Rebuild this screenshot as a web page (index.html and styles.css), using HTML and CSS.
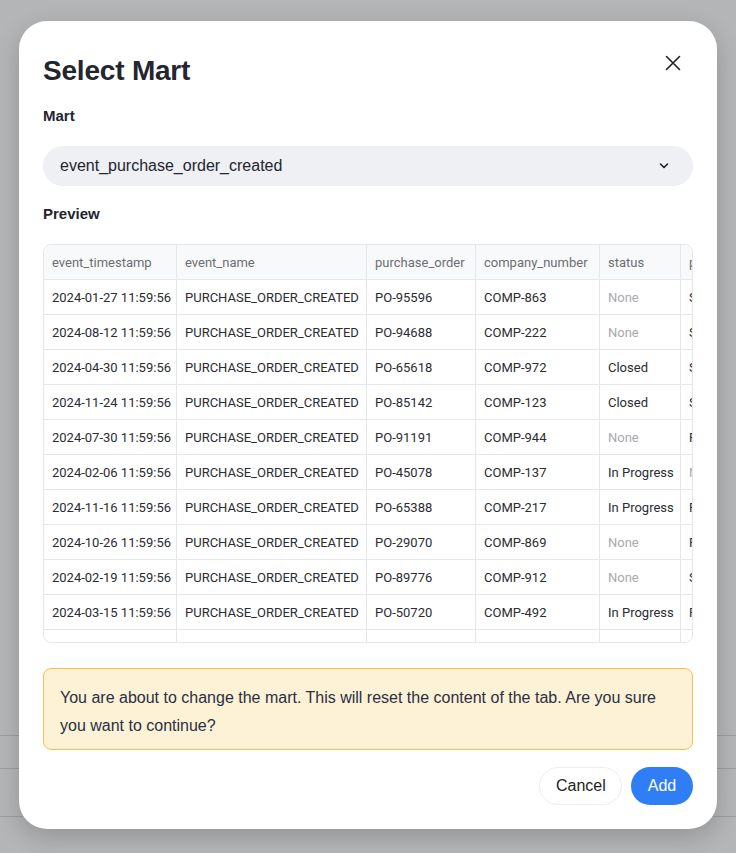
FILE: index.html
```html
<!DOCTYPE html>
<html>
<head>
<meta charset="utf-8">
<link rel="stylesheet" href="styles.css">
</head>
<body>
<div class="backdrop">
  <div class="bg-line l1"></div>
  <div class="bg-line l2"></div>
  <div class="bg-line l3"></div>
</div>
<div class="modal">
  <div class="modal-head">
    <h1 class="title">Select Mart</h1>
    <button class="close" aria-label="Close">
      <svg width="16" height="16" viewBox="0 0 16 16"><path d="M1.5 1.5L14.5 14.5M14.5 1.5L1.5 14.5" stroke="#222" stroke-width="1.6" fill="none" stroke-linecap="round"/></svg>
    </button>
  </div>
  <div class="label">Mart</div>
  <div class="select">
    <span>event_purchase_order_created</span>
    <svg width="10" height="6" viewBox="0 0 10 6"><path d="M1.5 1L5 4.5L8.5 1" stroke="#222" stroke-width="1.6" fill="none" stroke-linecap="round" stroke-linejoin="round"/></svg>
  </div>
  <div class="label preview-label">Preview</div>
  <div class="table-wrap">
    <table class="grid">
      <thead>
        <tr><th class="c1">event_timestamp</th><th class="c2">event_name</th><th class="c3">purchase_order</th><th class="c4">company_number</th><th class="c5">status</th><th class="c6">priority</th></tr>
      </thead>
      <tbody>
        <tr><td>2024-01-27 11:59:56</td><td>PURCHASE_ORDER_CREATED</td><td>PO-95596</td><td>COMP-863</td><td class="none">None</td><td>Standard</td></tr>
        <tr><td>2024-08-12 11:59:56</td><td>PURCHASE_ORDER_CREATED</td><td>PO-94688</td><td>COMP-222</td><td class="none">None</td><td>Standard</td></tr>
        <tr><td>2024-04-30 11:59:56</td><td>PURCHASE_ORDER_CREATED</td><td>PO-65618</td><td>COMP-972</td><td>Closed</td><td>Standard</td></tr>
        <tr><td>2024-11-24 11:59:56</td><td>PURCHASE_ORDER_CREATED</td><td>PO-85142</td><td>COMP-123</td><td>Closed</td><td>Standard</td></tr>
        <tr><td>2024-07-30 11:59:56</td><td>PURCHASE_ORDER_CREATED</td><td>PO-91191</td><td>COMP-944</td><td class="none">None</td><td>Fast</td></tr>
        <tr><td>2024-02-06 11:59:56</td><td>PURCHASE_ORDER_CREATED</td><td>PO-45078</td><td>COMP-137</td><td>In Progress</td><td class="none">None</td></tr>
        <tr><td>2024-11-16 11:59:56</td><td>PURCHASE_ORDER_CREATED</td><td>PO-65388</td><td>COMP-217</td><td>In Progress</td><td>Fast</td></tr>
        <tr><td>2024-10-26 11:59:56</td><td>PURCHASE_ORDER_CREATED</td><td>PO-29070</td><td>COMP-869</td><td class="none">None</td><td>Fast</td></tr>
        <tr><td>2024-02-19 11:59:56</td><td>PURCHASE_ORDER_CREATED</td><td>PO-89776</td><td>COMP-912</td><td class="none">None</td><td>Standard</td></tr>
        <tr><td>2024-03-15 11:59:56</td><td>PURCHASE_ORDER_CREATED</td><td>PO-50720</td><td>COMP-492</td><td>In Progress</td><td>Fast</td></tr>
        <tr><td>2024-05-09 11:59:56</td><td>PURCHASE_ORDER_CREATED</td><td>PO-14411</td><td>COMP-401</td><td>In Progress</td><td>Fast</td></tr>
      </tbody>
    </table>
  </div>
  <div class="warning">You are about to change the mart. This will reset the content of the tab. Are you sure you want to continue?</div>
  <div class="actions">
    <button class="btn btn-cancel">Cancel</button>
    <button class="btn btn-add">Add</button>
  </div>
</div>
</body>
</html>
```
FILE: styles.css
```css
html, body {
  margin: 0;
  padding: 0;
}
body {
  width: 736px;
  height: 853px;
  background: #b4b5b7;
  font-family: "Liberation Sans", Arial, sans-serif;
  position: relative;
  overflow: hidden;
  box-sizing: border-box;
  padding: 21px 19px 0 19px;
}
.backdrop {
  position: absolute;
  inset: 0;
  z-index: 0;
}
.bg-line {
  position: absolute;
  left: 0;
  right: 0;
  height: 1px;
  background: #9d9ea0;
}
.l1 { top: 735px; }
.l2 { top: 768px; }
.l3 { top: 816px; }

.modal {
  position: relative;
  z-index: 1;
  width: 698px;
  height: 808px;
  box-sizing: border-box;
  background: #fff;
  border-radius: 28px;
  box-shadow: 0 8px 24px rgba(0,0,0,0.18);
  padding: 32px 24px 0 24px;
  display: flex;
  flex-direction: column;
}
.modal-head {
  display: flex;
  justify-content: space-between;
  align-items: flex-start;
  height: 48px;
}
.title {
  margin: 0;
  font-size: 28px;
  font-weight: 700;
  color: #23252f;
  line-height: 36px;
  letter-spacing: -0.2px;
}
.close {
  border: none;
  background: none;
  padding: 0;
  margin: 2px 12px 0 0;
  width: 16px;
  height: 16px;
  display: flex;
  cursor: pointer;
}
.label {
  font-size: 15px;
  font-weight: 700;
  color: #23252f;
  line-height: 18px;
  margin-top: 6px;
}
.select {
  margin-top: 21px;
  height: 40px;
  border-radius: 20px;
  background: #eff0f4;
  display: flex;
  align-items: center;
  justify-content: space-between;
  padding: 0 24px 0 17px;
  font-size: 16px;
  color: #23252f;
}
.preview-label {
  margin-top: 19px;
}
.table-wrap {
  margin-top: 21px;
  height: 399px;
  border: 1px solid #e6e7e9;
  border-radius: 8px;
  overflow: hidden;
  box-sizing: border-box;
}
.grid {
  border-collapse: collapse;
  table-layout: fixed;
  font-family: "Roboto", "Noto Sans", sans-serif;
  font-size: 13px;
  width: 720px;
}
.grid th, .grid td {
  height: 34px;
  padding: 0 8px;
  text-align: left;
  white-space: nowrap;
  overflow: hidden;
  border-right: 1px solid #e6e7e9;
  border-bottom: 1px solid #e6e7e9;
}
.grid th {
  height: 34px;
  font-weight: 400;
  color: #6c6e72;
  background: #f8f9fa;
}
.grid td {
  color: #2a2c31;
}
.grid td.none {
  color: #a8aaae;
}
.c1 { width: 116px; }
.c2 { width: 173px; }
.c3 { width: 92px; }
.c4 { width: 107px; }
.c5 { width: 64px; }
.c6 { width: 80px; }

.warning {
  margin-top: 25px;
  background: #fdf2d5;
  border: 1px solid #f4c14e;
  border-radius: 8px;
  padding: 15px 16px 9px 16px;
  font-size: 16px;
  line-height: 28px;
  color: #2a2f45;
}
.actions {
  margin-top: 17px;
  display: flex;
  justify-content: flex-end;
  gap: 9px;
}
.btn {
  height: 38px;
  border-radius: 19px;
  font-family: "Liberation Sans", Arial, sans-serif;
  font-size: 16px;
  cursor: pointer;
}
.btn-cancel {
  background: #fff;
  border: 1px solid #eceef0;
  color: #222;
  padding: 0 16px;
  width: 83px;
}
.btn-add {
  background: #2f7ef6;
  border: none;
  color: #fff;
  width: 62px;
}
```
